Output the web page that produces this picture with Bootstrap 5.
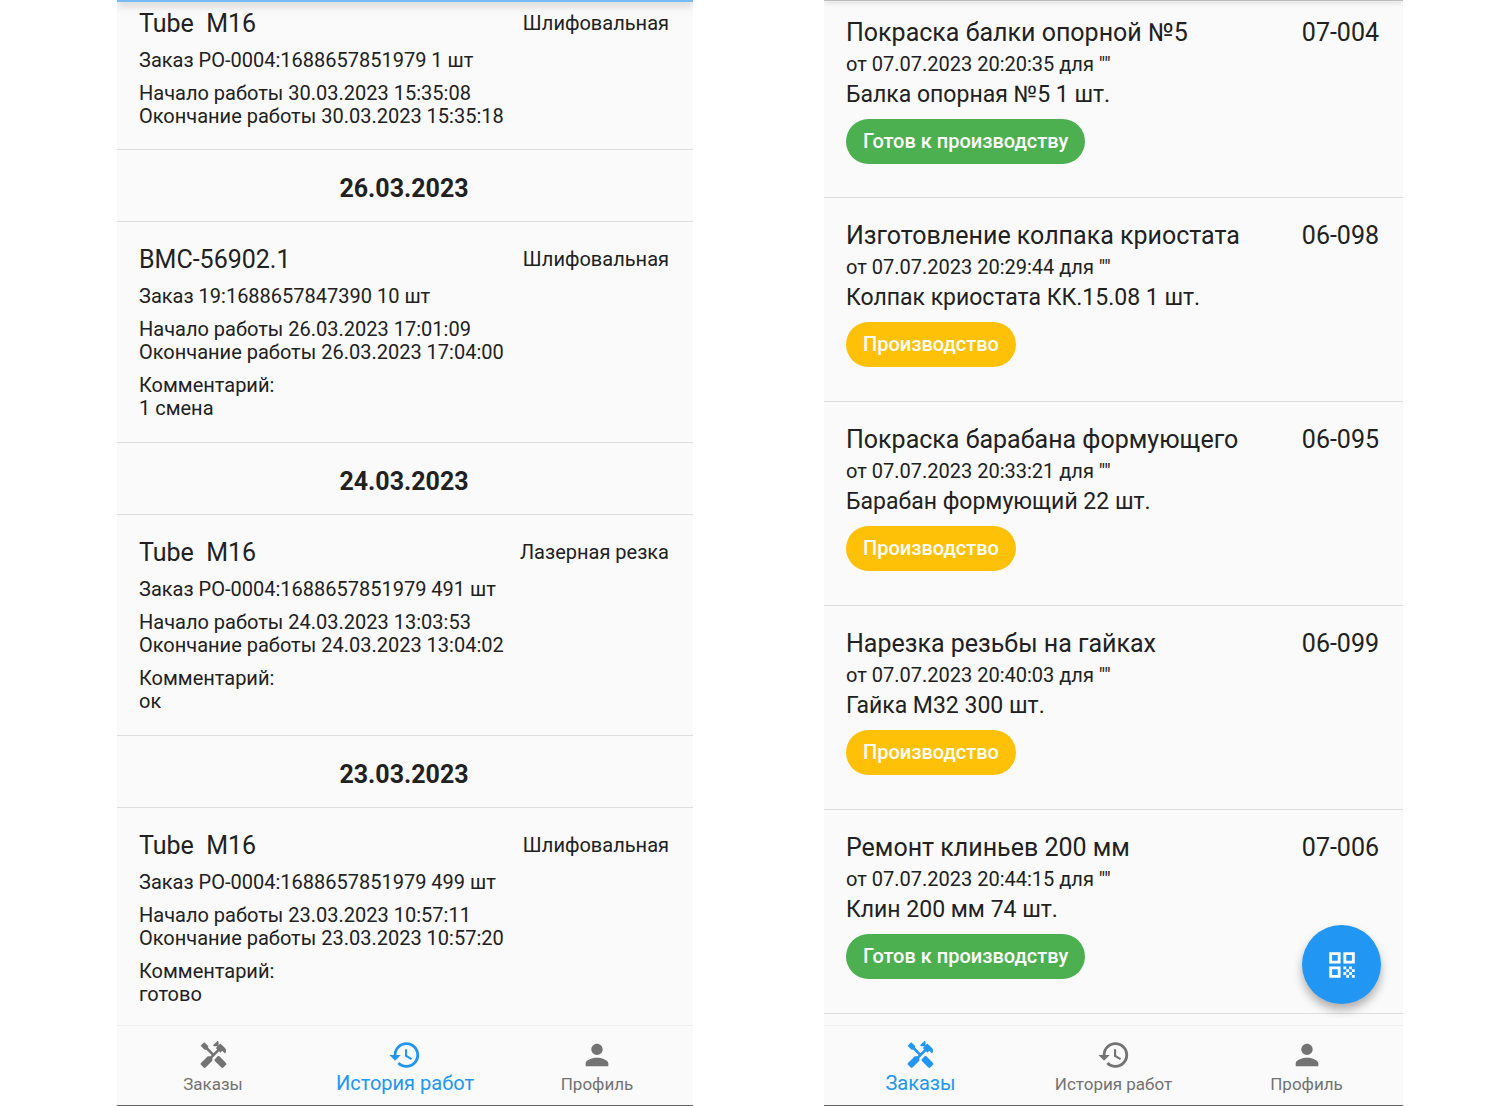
<!DOCTYPE html>
<html lang="ru">
<head>
<meta charset="utf-8">
<meta name="viewport" content="width=device-width, initial-scale=1">
<title>Заказы и история работ</title>
<link href="https://cdn.jsdelivr.net/npm/bootstrap@5.3.0/dist/css/bootstrap.min.css" rel="stylesheet">
<style>
body{font-family:Roboto,"Noto Sans",sans-serif;color:#212121;background:#fff}
.screens{height:100vh;gap:131px;padding:0 97px 0 117px}
.phone{flex:576 1 0;min-width:0;background:#fafafa;border-bottom:1px solid #666}
.phone.orders{flex-grow:579}
.feed{min-height:0}
.topbar{height:2px;background:#74bcf9;box-shadow:0 2px 8px rgba(0,0,0,.5);clip-path:inset(0 0 -14px 0);flex:none}
.shade{height:1px;background:#bdbdbd;box-shadow:0 1px 5px rgba(0,0,0,.4);clip-path:inset(0 0 -14px 0);flex:none}
.line{border-bottom:1px solid #dedede}
.job{padding:22px 24px 22px 22px;font-size:20px;line-height:23px}
.job.first{padding-top:6px;padding-bottom:21px}
.job h2{font-size:25px;line-height:32px;font-weight:400;margin:0;white-space:pre}
.job .proc{line-height:31px}
.job p{margin:10px 0 0}
.job .ord{margin-top:9px}
.day{font-size:25px;line-height:30px;font-weight:700;padding:24px 2px 17px 0;margin:0;text-align:center}
.order{padding:23px 24px 34px 22px;font-size:20px;line-height:23px}
.order.first{padding-top:17px;padding-bottom:33px}
.order h2,.order .num{font-size:25px;line-height:30px;font-weight:400;margin:0}
.order .when{margin:5px 0}
.order .what{font-size:23px;line-height:28px;margin:0 0 10px}
.pill{height:45px;padding:0 17px;font-size:20px;font-weight:500;line-height:45px;color:#fff;border-radius:23px}
.ready{background:#4caf50}
.prod{background:#ffc107}
.tabs{height:80px;border-top:1px solid #f0f0f0;flex:none}
.tabs a{flex:1 1 0;color:#737373;font-size:17px;line-height:24px;text-decoration:none;padding-top:12px}
.tabs a.on{color:#2196f3;font-size:20px;line-height:22px}
.tabs svg{width:34px;height:34px;fill:currentColor}
.tabs svg.craft{width:31px}
.fab{right:22px;bottom:101px;width:79px;height:79px;background:#2196f3;color:#fff;box-shadow:0 6px 10px rgba(0,0,0,.3)}
.fab svg{width:34px;height:34px;fill:currentColor}
</style>
<script src="https://cdn.jsdelivr.net/npm/bootstrap@5.3.0/dist/js/bootstrap.bundle.min.js"></script>
</head>
<body>
<svg class="d-none">
<symbol id="tools" viewBox="0 0 24 24"><path d="M21.67 18.17l-5.3-5.3h-.99l-2.54 2.54v.99l5.3 5.3c.39.39 1.02.39 1.41 0l2.12-2.12c.39-.38.39-1.02 0-1.41z"/><path d="M17.34 10.19l1.41-1.41 2.12 2.12c1.17-1.17 1.17-3.07 0-4.24l-3.54-3.54-1.41 1.41V1.71L15.22 1l-3.54 3.54.71.71h2.83l-1.41 1.41 1.06 1.06-2.89 2.89-4.13-4.13V5.06L4.83 2.04 2 4.87 5.03 7.9h1.41l4.13 4.13-.85.85H7.6l-5.3 5.3c-.39.39-.39 1.02 0 1.41l2.12 2.12c.39.39 1.02.39 1.41 0l5.3-5.3v-2.12l5.15-5.15 1.06 1.05z"/></symbol>
<symbol id="history" viewBox="0 0 24 24"><path d="M13 3a9 9 0 0 0-9 9H1l3.89 3.89.07.14L9 12H6c0-3.87 3.13-7 7-7s7 3.13 7 7-3.13 7-7 7c-1.93 0-3.68-.79-4.94-2.06l-1.42 1.42A8.95 8.95 0 0 0 13 21a9 9 0 0 0 0-18zm-1 5v5l4.28 2.54.72-1.21-3.5-2.08V8H12z"/></symbol>
<symbol id="person" viewBox="0 0 24 24"><path d="M12 12c2.21 0 4-1.79 4-4s-1.79-4-4-4-4 1.79-4 4 1.79 4 4 4zm0 2c-2.67 0-8 1.34-8 4v2h16v-2c0-2.66-5.33-4-8-4z"/></symbol>
<symbol id="qr" viewBox="0 0 24 24"><path fill-rule="evenodd" d="M3 3h8v8H3zm2 2v4h4V5zM3 13h8v8H3zm2 2v4h4v-4zM13 3h8v8h-8zm2 2v4h4V5zM19 19h2v2h-2zM13 13h2v2h-2zM15 15h2v2h-2zM13 17h2v2h-2zM15 19h2v2h-2zM17 17h2v2h-2zM17 13h2v2h-2zM19 15h2v2h-2z"/></symbol>
</svg>
<main class="screens d-flex">
<section class="phone d-flex flex-column">
<div class="topbar"></div>
<div class="feed flex-grow-1 overflow-hidden">
<article class="job first line"><div class="d-flex justify-content-between"><h2>Tube  M16</h2><span class="proc">Шлифовальная</span></div><p class="ord">Заказ РО-0004:1688657851979 1 шт</p><p>Начало работы 30.03.2023 15:35:08<br>Окончание работы 30.03.2023 15:35:18</p></article>
<h3 class="day line">26.03.2023</h3>
<article class="job line"><div class="d-flex justify-content-between"><h2>ВМС-56902.1</h2><span class="proc">Шлифовальная</span></div><p class="ord">Заказ 19:1688657847390 10 шт</p><p>Начало работы 26.03.2023 17:01:09<br>Окончание работы 26.03.2023 17:04:00</p><p>Комментарий:<br>1 смена</p></article>
<h3 class="day line">24.03.2023</h3>
<article class="job line"><div class="d-flex justify-content-between"><h2>Tube  M16</h2><span class="proc">Лазерная резка</span></div><p class="ord">Заказ РО-0004:1688657851979 491 шт</p><p>Начало работы 24.03.2023 13:03:53<br>Окончание работы 24.03.2023 13:04:02</p><p>Комментарий:<br>ок</p></article>
<h3 class="day line">23.03.2023</h3>
<article class="job"><div class="d-flex justify-content-between"><h2>Tube  M16</h2><span class="proc">Шлифовальная</span></div><p class="ord">Заказ РО-0004:1688657851979 499 шт</p><p>Начало работы 23.03.2023 10:57:11<br>Окончание работы 23.03.2023 10:57:20</p><p>Комментарий:<br>готово</p></article>
</div>
<nav class="tabs d-flex">
<a href="#" class="d-flex flex-column align-items-center"><svg class="craft" aria-hidden="true"><use href="#tools"/></svg>Заказы</a>
<a href="#" class="on d-flex flex-column align-items-center"><svg aria-hidden="true"><use href="#history"/></svg>История работ</a>
<a href="#" class="d-flex flex-column align-items-center"><svg aria-hidden="true"><use href="#person"/></svg>Профиль</a>
</nav>
</section>
<section class="phone orders d-flex flex-column position-relative">
<div class="shade"></div>
<div class="feed flex-grow-1 overflow-hidden">
<article class="order first line"><div class="d-flex justify-content-between"><h2>Покраска балки опорной №5</h2><span class="num">07-004</span></div><p class="when">от 07.07.2023 20:20:35 для ""</p><p class="what">Балка опорная №5 1 шт.</p><span class="pill ready d-inline-block align-top">Готов к производству</span></article>
<article class="order line"><div class="d-flex justify-content-between"><h2>Изготовление колпака криостата</h2><span class="num">06-098</span></div><p class="when">от 07.07.2023 20:29:44 для ""</p><p class="what">Колпак криостата КК.15.08 1 шт.</p><span class="pill prod d-inline-block align-top">Производство</span></article>
<article class="order line"><div class="d-flex justify-content-between"><h2>Покраска барабана формующего</h2><span class="num">06-095</span></div><p class="when">от 07.07.2023 20:33:21 для ""</p><p class="what">Барабан формующий 22 шт.</p><span class="pill prod d-inline-block align-top">Производство</span></article>
<article class="order line"><div class="d-flex justify-content-between"><h2>Нарезка резьбы на гайках</h2><span class="num">06-099</span></div><p class="when">от 07.07.2023 20:40:03 для ""</p><p class="what">Гайка М32 300 шт.</p><span class="pill prod d-inline-block align-top">Производство</span></article>
<article class="order line"><div class="d-flex justify-content-between"><h2>Ремонт клиньев 200 мм</h2><span class="num">07-006</span></div><p class="when">от 07.07.2023 20:44:15 для ""</p><p class="what">Клин 200 мм 74 шт.</p><span class="pill ready d-inline-block align-top">Готов к производству</span></article>
</div>
<button type="button" class="fab btn rounded-circle p-0 border-0 position-absolute d-flex align-items-center justify-content-center" aria-label="Сканировать QR-код"><svg aria-hidden="true"><use href="#qr"/></svg></button>
<nav class="tabs d-flex">
<a href="#" class="on d-flex flex-column align-items-center"><svg class="craft" aria-hidden="true"><use href="#tools"/></svg>Заказы</a>
<a href="#" class="d-flex flex-column align-items-center"><svg aria-hidden="true"><use href="#history"/></svg>История работ</a>
<a href="#" class="d-flex flex-column align-items-center"><svg aria-hidden="true"><use href="#person"/></svg>Профиль</a>
</nav>
</section>
</main>
</body>
</html>
